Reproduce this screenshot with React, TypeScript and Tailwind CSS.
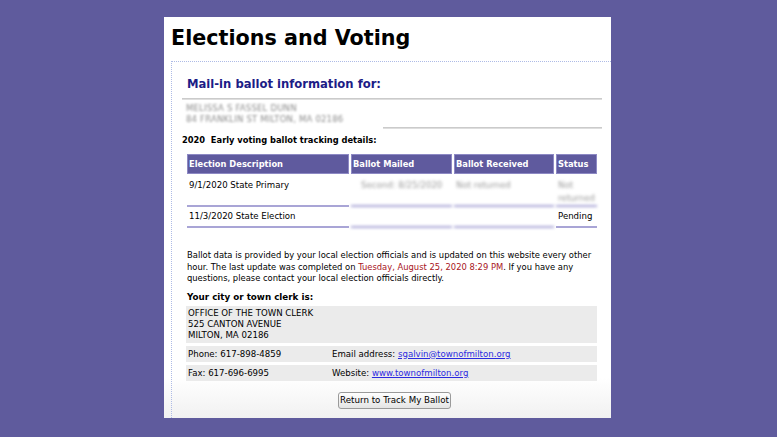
import React from 'react'

interface BallotRow {
  election: string
  mailed: string
  received: string
  status: string
  blurred: boolean
}

const rows: BallotRow[] = [
  { election: '9/1/2020 State Primary', mailed: 'Second: 8/25/2020', received: 'Not returned', status: 'Not returned', blurred: true },
  { election: '11/3/2020 State Election', mailed: '', received: '', status: 'Pending', blurred: false },
]

const headers = ['Election Description', 'Ballot Mailed', 'Ballot Received', 'Status']

export default function App() {
  return (
    <div className="w-[777px] h-[437px] overflow-hidden bg-[#5f5b9d] pl-[164px] pt-[17px] font-['DejaVu_Sans',Verdana,sans-serif] text-black">
      <div className="w-[447px] h-[401px] bg-gradient-to-b from-white from-90% to-[#f1f1f1] flex flex-col pt-[8px]">
        <h1 className="pl-[7px] text-[20.7px] leading-[26px] font-bold">Elections and Voting</h1>

        {/* Ballot panel */}
        <div className="mt-[10px] ml-[7px] flex-1 border-l border-t border-dotted border-[#aebbe6] pl-[10px] pr-[9px] pt-[15px]">
          <h2 className="pl-[5px] text-[11.6px] leading-[15px] font-bold text-[#1c1c86]">Mail-in ballot information for:</h2>
          <div className="mt-[6px] h-[2px] bg-[#dedede] border-t border-[#cbcbcb]" />
          <div className="pl-[4px] pt-[3px] text-[8.5px] leading-[11px] text-[#8d8d8d] blur-[1.3px] tracking-[0.2px]">
            <div>MELISSA S FASSEL DUNN</div>
            <div>84 FRANKLIN ST MILTON, MA 02186</div>
          </div>
          <div className="mt-[2px] ml-[201px] h-[2px] bg-[#dedede] border-t border-[#cbcbcb]" />

          <div className="mt-[6px] text-[8.3px] leading-[11px] font-bold whitespace-pre">2020  Early voting ballot tracking details:</div>

          {/* Tracking table */}
          <div className="mt-[8px] ml-[5px] w-[410px] grid grid-cols-[162px_101px_100px_41px] gap-x-[2px] text-[8.6px] leading-[13px]">
            {headers.map(h => (
              <div key={h} className="h-[20px] bg-[#5f5a9e] border border-[#8d89c4] text-white text-[8.3px] font-bold pl-[1px] flex items-center whitespace-nowrap overflow-hidden">
                {h}
              </div>
            ))}
            {rows.map(row => (
              <React.Fragment key={row.election}>
                <div className={`${row.blurred ? 'h-[33px] pt-[5px]' : 'h-[21px] pt-[3px]'} border-b-2 border-[#a9a5d6] pl-[2px]`}>
                  {row.election}
                </div>
                <div className={`${row.blurred ? 'h-[33px] pt-[5px]' : 'h-[21px] pt-[3px]'} border-b-2 border-[#a9a5d6] pl-[10px] text-[#9a9a9a] blur-[1.4px] whitespace-nowrap`}>
                  {row.mailed}
                </div>
                <div className={`${row.blurred ? 'h-[33px] pt-[5px]' : 'h-[21px] pt-[3px]'} border-b-2 border-[#a9a5d6] pl-[2px] text-[#9a9a9a] blur-[1.4px]`}>
                  {row.received}
                </div>
                <div className={`${row.blurred ? 'h-[33px] pt-[5px] text-[#9a9a9a] blur-[1.4px]' : 'h-[21px] pt-[3px]'} border-b-2 border-[#a9a5d6] pl-[2px]`}>
                  {row.status}
                </div>
              </React.Fragment>
            ))}
          </div>

          <p className="mt-[22px] pl-[5px] text-[8.4px] leading-[11.7px] whitespace-nowrap">
            Ballot data is provided by your local election officials and is updated on this website every other
            <br />
            hour. The last update was completed on <span className="text-[#a8141c]">Tuesday, August 25, 2020 8:29 PM</span>. If you have any
            <br />
            questions, please contact your local election officials directly.
          </p>

          <div className="mt-[7px] pl-[5px] text-[8.75px] leading-[11px] font-bold">Your city or town clerk is:</div>

          {/* Clerk info */}
          <div className="mt-[3px] ml-[4px] w-[411px] flex flex-col gap-[3px] text-[8.6px]">
            <div className="bg-[#ebebeb] pl-[2px] pt-[2px] leading-[11px] h-[37px]">
              <div>OFFICE OF THE TOWN CLERK</div>
              <div>525 CANTON AVENUE</div>
              <div>MILTON, MA 02186</div>
            </div>
            <div className="bg-[#ebebeb] h-[16px] pl-[2px] flex items-center leading-[13px]">
              <span className="w-[144px]">Phone: 617-898-4859</span>
              <span>
                Email address: <a className="text-[#2a2ae0] underline">sgalvin@townofmilton.org</a>
              </span>
            </div>
            <div className="bg-[#ebebeb] h-[16px] pl-[2px] flex items-center leading-[13px]">
              <span className="w-[144px]">Fax: 617-696-6995</span>
              <span>
                Website: <a className="text-[#2a2ae0] underline">www.townofmilton.org</a>
              </span>
            </div>
          </div>

          <div className="mt-[11px] flex justify-center pl-[5px]">
            <button className="h-[17px] w-[113px] rounded-[3px] border border-[#9a9a9a] bg-gradient-to-b from-white to-[#e4e4e4] text-[8.7px] leading-[13px] text-black whitespace-nowrap">
              Return to Track My Ballot
            </button>
          </div>
        </div>
      </div>
    </div>
  )
}
